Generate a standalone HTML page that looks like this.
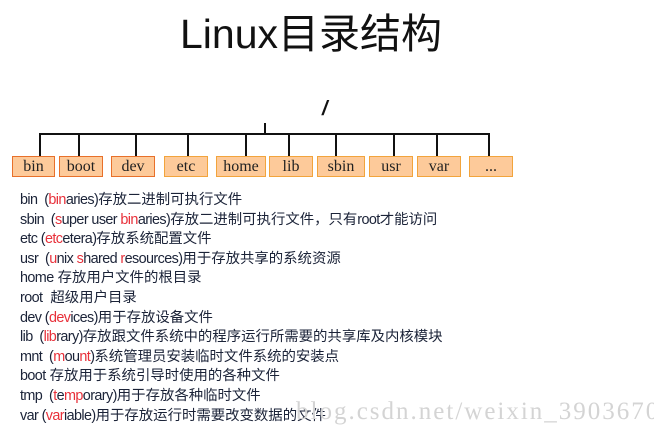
<!DOCTYPE html>
<html><head><meta charset="utf-8"><style>
body{margin:0;width:654px;height:426px;background:#fff;position:relative;overflow:hidden;font-family:"Liberation Sans","Noto Sans CJK SC",sans-serif;}
.t{position:absolute;left:180px;top:0px;font-size:41px;color:#111;white-space:nowrap}
.box{position:absolute;top:156px;height:21px;background:#fdca9a;border:1px solid #f2a43c;box-sizing:border-box;font-family:"Liberation Serif",serif;font-size:16px;text-align:center;line-height:19px;color:#222}
.d{border-color:#e8702a}
.l{position:absolute;background:#111}
.tx{position:absolute;left:20px;top:191px;font-size:14.4px;line-height:19.6px;color:#1b2338;white-space:nowrap}
.tx i{font-style:normal;letter-spacing:-0.6px}
.r{color:#e8303a}
.wm{position:absolute;left:296px;top:398px;font-family:"Liberation Serif",serif;font-size:25px;color:#d4d4d4;white-space:nowrap;letter-spacing:2px}
</style></head><body>
<div class="t">Linux目录结构</div>
<div style="position:absolute;left:322px;top:98px;font-size:20px;font-style:italic;font-weight:bold;color:#111">/</div>
<div class="l" style="left:264px;top:123px;width:2px;height:12px"></div>
<div class="l" style="left:40px;top:133px;width:450px;height:2px"></div>
<div class="l" style="left:39px;top:133px;width:2px;height:24px"></div>
<div class="l" style="left:78px;top:133px;width:2px;height:24px"></div>
<div class="l" style="left:135px;top:133px;width:2px;height:24px"></div>
<div class="l" style="left:187px;top:133px;width:2px;height:24px"></div>
<div class="l" style="left:245px;top:133px;width:2px;height:24px"></div>
<div class="l" style="left:288px;top:133px;width:2px;height:24px"></div>
<div class="l" style="left:335px;top:133px;width:2px;height:24px"></div>
<div class="l" style="left:393px;top:133px;width:2px;height:24px"></div>
<div class="l" style="left:436px;top:133px;width:2px;height:24px"></div>
<div class="l" style="left:488px;top:133px;width:2px;height:24px"></div>
<div class="box d" style="left:12px;width:43px">bin</div>
<div class="box d" style="left:59px;width:44px">boot</div>
<div class="box d" style="left:111px;width:44px">dev</div>
<div class="box" style="left:164px;width:44px">etc</div>
<div class="box" style="left:216px;width:50px">home</div>
<div class="box" style="left:269px;width:44px">lib</div>
<div class="box" style="left:317px;width:48px">sbin</div>
<div class="box" style="left:369px;width:44px">usr</div>
<div class="box" style="left:417px;width:44px">var</div>
<div class="box" style="left:469px;width:44px">...</div>
<div class="tx">
<i>bin &nbsp;(<span class="r">bin</span>aries)</i>存放二进制可执行文件<br>
<i>sbin &nbsp;(<span class="r">s</span>uper user <span class="r">bin</span>aries)</i>存放二进制可执行文件，只有<i>root</i>才能访问<br>
<i>etc (<span class="r">etc</span>etera)</i>存放系统配置文件<br>
<i>usr &nbsp;(<span class="r">u</span>nix <span class="r">s</span>hared <span class="r">r</span>esources)</i>用于存放共享的系统资源<br>
<i>home</i> 存放用户文件的根目录<br>
<i>root</i> &nbsp;超级用户目录<br>
<i>dev (<span class="r">dev</span>ices)</i>用于存放设备文件<br>
<i>lib &nbsp;(<span class="r">lib</span>rary)</i>存放跟文件系统中的程序运行所需要的共享库及内核模块<br>
<i>mnt &nbsp;(<span class="r">m</span>ou<span class="r">nt</span>)</i>系统管理员安装临时文件系统的安装点<br>
<i>boot</i> 存放用于系统引导时使用的各种文件<br>
<i>tmp &nbsp;(<span class="r">t</span>e<span class="r">mp</span>orary)</i>用于存放各种临时文件<br>
<i>var (<span class="r">var</span>iable)</i>用于存放运行时需要改变数据的文件
</div>
<div class="wm">blog.csdn.net/weixin_3903670</div>
</body></html>
